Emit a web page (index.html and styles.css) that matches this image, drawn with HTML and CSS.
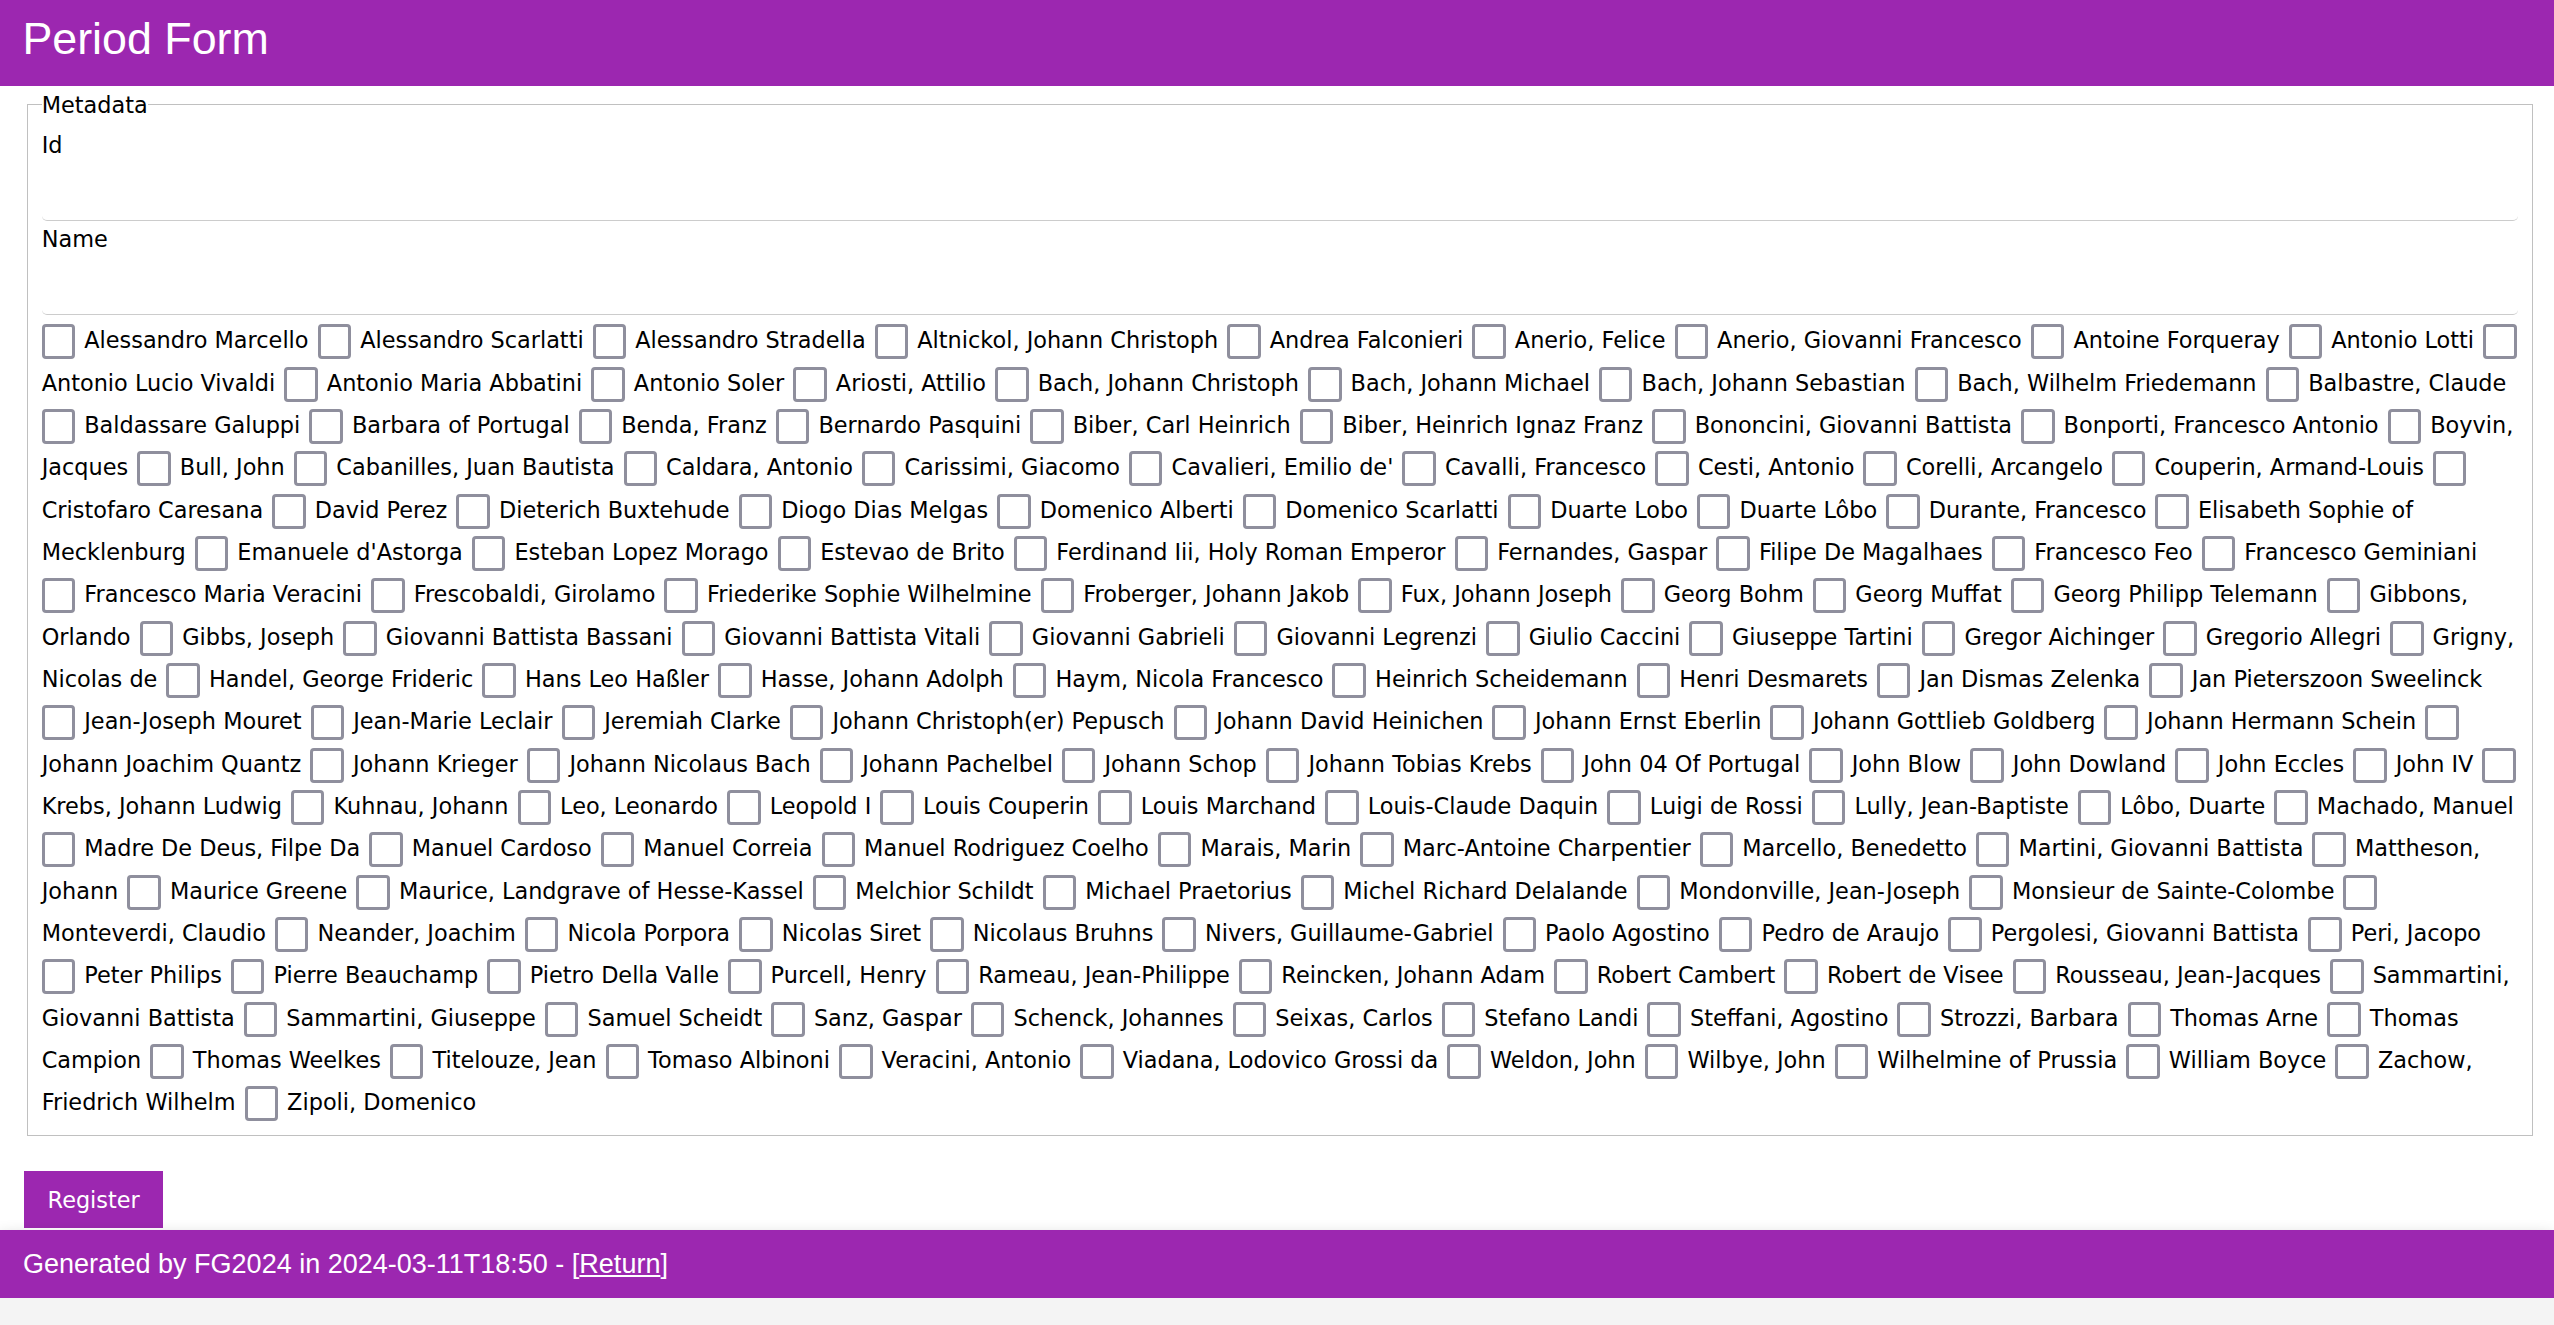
FILE: index.html
```html
<!DOCTYPE html>
<html lang="en">
<head>
<meta charset="utf-8">
<title>Period Form</title>
<link rel="stylesheet" href="styles.css">
</head>
<body>
<header class="topbar"><h1 class="title">Period Form</h1></header>
<main class="main">
<form class="form">
<fieldset class="meta">
<legend class="legend">Metadata</legend>
<label class="field-label" for="f-id">Id</label>
<input class="text-input" id="f-id" type="text">
<label class="field-label" for="f-name">Name</label>
<input class="text-input" id="f-name" type="text">
<div class="options">
<label class="opt"><input type="checkbox" class="cb"> <span class="nm">Alessandro Marcello</span></label>
<label class="opt"><input type="checkbox" class="cb"> <span class="nm">Alessandro Scarlatti</span></label>
<label class="opt"><input type="checkbox" class="cb"> <span class="nm">Alessandro Stradella</span></label>
<label class="opt"><input type="checkbox" class="cb"> <span class="nm">Altnickol, Johann Christoph</span></label>
<label class="opt"><input type="checkbox" class="cb"> <span class="nm">Andrea Falconieri</span></label>
<label class="opt"><input type="checkbox" class="cb"> <span class="nm">Anerio, Felice</span></label>
<label class="opt"><input type="checkbox" class="cb"> <span class="nm">Anerio, Giovanni Francesco</span></label>
<label class="opt"><input type="checkbox" class="cb"> <span class="nm">Antoine Forqueray</span></label>
<label class="opt"><input type="checkbox" class="cb"> <span class="nm">Antonio Lotti</span></label>
<label class="opt"><input type="checkbox" class="cb"> <span class="nm">Antonio Lucio Vivaldi</span></label>
<label class="opt"><input type="checkbox" class="cb"> <span class="nm">Antonio Maria Abbatini</span></label>
<label class="opt"><input type="checkbox" class="cb"> <span class="nm">Antonio Soler</span></label>
<label class="opt"><input type="checkbox" class="cb"> <span class="nm">Ariosti, Attilio</span></label>
<label class="opt"><input type="checkbox" class="cb"> <span class="nm">Bach, Johann Christoph</span></label>
<label class="opt"><input type="checkbox" class="cb"> <span class="nm">Bach, Johann Michael</span></label>
<label class="opt"><input type="checkbox" class="cb"> <span class="nm">Bach, Johann Sebastian</span></label>
<label class="opt"><input type="checkbox" class="cb"> <span class="nm">Bach, Wilhelm Friedemann</span></label>
<label class="opt"><input type="checkbox" class="cb"> <span class="nm">Balbastre, Claude</span></label>
<label class="opt"><input type="checkbox" class="cb"> <span class="nm">Baldassare Galuppi</span></label>
<label class="opt"><input type="checkbox" class="cb"> <span class="nm">Barbara of Portugal</span></label>
<label class="opt"><input type="checkbox" class="cb"> <span class="nm">Benda, Franz</span></label>
<label class="opt"><input type="checkbox" class="cb"> <span class="nm">Bernardo Pasquini</span></label>
<label class="opt"><input type="checkbox" class="cb"> <span class="nm">Biber, Carl Heinrich</span></label>
<label class="opt"><input type="checkbox" class="cb"> <span class="nm">Biber, Heinrich Ignaz Franz</span></label>
<label class="opt"><input type="checkbox" class="cb"> <span class="nm">Bononcini, Giovanni Battista</span></label>
<label class="opt"><input type="checkbox" class="cb"> <span class="nm">Bonporti, Francesco Antonio</span></label>
<label class="opt"><input type="checkbox" class="cb"> <span class="nm">Boyvin, Jacques</span></label>
<label class="opt"><input type="checkbox" class="cb"> <span class="nm">Bull, John</span></label>
<label class="opt"><input type="checkbox" class="cb"> <span class="nm">Cabanilles, Juan Bautista</span></label>
<label class="opt"><input type="checkbox" class="cb"> <span class="nm">Caldara, Antonio</span></label>
<label class="opt"><input type="checkbox" class="cb"> <span class="nm">Carissimi, Giacomo</span></label>
<label class="opt"><input type="checkbox" class="cb"> <span class="nm">Cavalieri, Emilio de'</span></label>
<label class="opt"><input type="checkbox" class="cb"> <span class="nm">Cavalli, Francesco</span></label>
<label class="opt"><input type="checkbox" class="cb"> <span class="nm">Cesti, Antonio</span></label>
<label class="opt"><input type="checkbox" class="cb"> <span class="nm">Corelli, Arcangelo</span></label>
<label class="opt"><input type="checkbox" class="cb"> <span class="nm">Couperin, Armand-Louis</span></label>
<label class="opt"><input type="checkbox" class="cb"> <span class="nm">Cristofaro Caresana</span></label>
<label class="opt"><input type="checkbox" class="cb"> <span class="nm">David Perez</span></label>
<label class="opt"><input type="checkbox" class="cb"> <span class="nm">Dieterich Buxtehude</span></label>
<label class="opt"><input type="checkbox" class="cb"> <span class="nm">Diogo Dias Melgas</span></label>
<label class="opt"><input type="checkbox" class="cb"> <span class="nm">Domenico Alberti</span></label>
<label class="opt"><input type="checkbox" class="cb"> <span class="nm">Domenico Scarlatti</span></label>
<label class="opt"><input type="checkbox" class="cb"> <span class="nm">Duarte Lobo</span></label>
<label class="opt"><input type="checkbox" class="cb"> <span class="nm">Duarte Lôbo</span></label>
<label class="opt"><input type="checkbox" class="cb"> <span class="nm">Durante, Francesco</span></label>
<label class="opt"><input type="checkbox" class="cb"> <span class="nm">Elisabeth Sophie of Mecklenburg</span></label>
<label class="opt"><input type="checkbox" class="cb"> <span class="nm">Emanuele d'Astorga</span></label>
<label class="opt"><input type="checkbox" class="cb"> <span class="nm">Esteban Lopez Morago</span></label>
<label class="opt"><input type="checkbox" class="cb"> <span class="nm">Estevao de Brito</span></label>
<label class="opt"><input type="checkbox" class="cb"> <span class="nm">Ferdinand Iii, Holy Roman Emperor</span></label>
<label class="opt"><input type="checkbox" class="cb"> <span class="nm">Fernandes, Gaspar</span></label>
<label class="opt"><input type="checkbox" class="cb"> <span class="nm">Filipe De Magalhaes</span></label>
<label class="opt"><input type="checkbox" class="cb"> <span class="nm">Francesco Feo</span></label>
<label class="opt"><input type="checkbox" class="cb"> <span class="nm">Francesco Geminiani</span></label>
<label class="opt"><input type="checkbox" class="cb"> <span class="nm">Francesco Maria Veracini</span></label>
<label class="opt"><input type="checkbox" class="cb"> <span class="nm">Frescobaldi, Girolamo</span></label>
<label class="opt"><input type="checkbox" class="cb"> <span class="nm">Friederike Sophie Wilhelmine</span></label>
<label class="opt"><input type="checkbox" class="cb"> <span class="nm">Froberger, Johann Jakob</span></label>
<label class="opt"><input type="checkbox" class="cb"> <span class="nm">Fux, Johann Joseph</span></label>
<label class="opt"><input type="checkbox" class="cb"> <span class="nm">Georg Bohm</span></label>
<label class="opt"><input type="checkbox" class="cb"> <span class="nm">Georg Muffat</span></label>
<label class="opt"><input type="checkbox" class="cb"> <span class="nm">Georg Philipp Telemann</span></label>
<label class="opt"><input type="checkbox" class="cb"> <span class="nm">Gibbons, Orlando</span></label>
<label class="opt"><input type="checkbox" class="cb"> <span class="nm">Gibbs, Joseph</span></label>
<label class="opt"><input type="checkbox" class="cb"> <span class="nm">Giovanni Battista Bassani</span></label>
<label class="opt"><input type="checkbox" class="cb"> <span class="nm">Giovanni Battista Vitali</span></label>
<label class="opt"><input type="checkbox" class="cb"> <span class="nm">Giovanni Gabrieli</span></label>
<label class="opt"><input type="checkbox" class="cb"> <span class="nm">Giovanni Legrenzi</span></label>
<label class="opt"><input type="checkbox" class="cb"> <span class="nm">Giulio Caccini</span></label>
<label class="opt"><input type="checkbox" class="cb"> <span class="nm">Giuseppe Tartini</span></label>
<label class="opt"><input type="checkbox" class="cb"> <span class="nm">Gregor Aichinger</span></label>
<label class="opt"><input type="checkbox" class="cb"> <span class="nm">Gregorio Allegri</span></label>
<label class="opt"><input type="checkbox" class="cb"> <span class="nm">Grigny, Nicolas de</span></label>
<label class="opt"><input type="checkbox" class="cb"> <span class="nm">Handel, George Frideric</span></label>
<label class="opt"><input type="checkbox" class="cb"> <span class="nm">Hans Leo Haßler</span></label>
<label class="opt"><input type="checkbox" class="cb"> <span class="nm">Hasse, Johann Adolph</span></label>
<label class="opt"><input type="checkbox" class="cb"> <span class="nm">Haym, Nicola Francesco</span></label>
<label class="opt"><input type="checkbox" class="cb"> <span class="nm">Heinrich Scheidemann</span></label>
<label class="opt"><input type="checkbox" class="cb"> <span class="nm">Henri Desmarets</span></label>
<label class="opt"><input type="checkbox" class="cb"> <span class="nm">Jan Dismas Zelenka</span></label>
<label class="opt"><input type="checkbox" class="cb"> <span class="nm">Jan Pieterszoon Sweelinck</span></label>
<label class="opt"><input type="checkbox" class="cb"> <span class="nm">Jean-Joseph Mouret</span></label>
<label class="opt"><input type="checkbox" class="cb"> <span class="nm">Jean-Marie Leclair</span></label>
<label class="opt"><input type="checkbox" class="cb"> <span class="nm">Jeremiah Clarke</span></label>
<label class="opt"><input type="checkbox" class="cb"> <span class="nm">Johann Christoph(er) Pepusch</span></label>
<label class="opt"><input type="checkbox" class="cb"> <span class="nm">Johann David Heinichen</span></label>
<label class="opt"><input type="checkbox" class="cb"> <span class="nm">Johann Ernst Eberlin</span></label>
<label class="opt"><input type="checkbox" class="cb"> <span class="nm">Johann Gottlieb Goldberg</span></label>
<label class="opt"><input type="checkbox" class="cb"> <span class="nm">Johann Hermann Schein</span></label>
<label class="opt"><input type="checkbox" class="cb"> <span class="nm">Johann Joachim Quantz</span></label>
<label class="opt"><input type="checkbox" class="cb"> <span class="nm">Johann Krieger</span></label>
<label class="opt"><input type="checkbox" class="cb"> <span class="nm">Johann Nicolaus Bach</span></label>
<label class="opt"><input type="checkbox" class="cb"> <span class="nm">Johann Pachelbel</span></label>
<label class="opt"><input type="checkbox" class="cb"> <span class="nm">Johann Schop</span></label>
<label class="opt"><input type="checkbox" class="cb"> <span class="nm">Johann Tobias Krebs</span></label>
<label class="opt"><input type="checkbox" class="cb"> <span class="nm">John 04 Of Portugal</span></label>
<label class="opt"><input type="checkbox" class="cb"> <span class="nm">John Blow</span></label>
<label class="opt"><input type="checkbox" class="cb"> <span class="nm">John Dowland</span></label>
<label class="opt"><input type="checkbox" class="cb"> <span class="nm">John Eccles</span></label>
<label class="opt"><input type="checkbox" class="cb"> <span class="nm">John IV</span></label>
<label class="opt"><input type="checkbox" class="cb"> <span class="nm">Krebs, Johann Ludwig</span></label>
<label class="opt"><input type="checkbox" class="cb"> <span class="nm">Kuhnau, Johann</span></label>
<label class="opt"><input type="checkbox" class="cb"> <span class="nm">Leo, Leonardo</span></label>
<label class="opt"><input type="checkbox" class="cb"> <span class="nm">Leopold I</span></label>
<label class="opt"><input type="checkbox" class="cb"> <span class="nm">Louis Couperin</span></label>
<label class="opt"><input type="checkbox" class="cb"> <span class="nm">Louis Marchand</span></label>
<label class="opt"><input type="checkbox" class="cb"> <span class="nm">Louis-Claude Daquin</span></label>
<label class="opt"><input type="checkbox" class="cb"> <span class="nm">Luigi de Rossi</span></label>
<label class="opt"><input type="checkbox" class="cb"> <span class="nm">Lully, Jean-Baptiste</span></label>
<label class="opt"><input type="checkbox" class="cb"> <span class="nm">Lôbo, Duarte</span></label>
<label class="opt"><input type="checkbox" class="cb"> <span class="nm">Machado, Manuel</span></label>
<label class="opt"><input type="checkbox" class="cb"> <span class="nm">Madre De Deus, Filpe Da</span></label>
<label class="opt"><input type="checkbox" class="cb"> <span class="nm">Manuel Cardoso</span></label>
<label class="opt"><input type="checkbox" class="cb"> <span class="nm">Manuel Correia</span></label>
<label class="opt"><input type="checkbox" class="cb"> <span class="nm">Manuel Rodriguez Coelho</span></label>
<label class="opt"><input type="checkbox" class="cb"> <span class="nm">Marais, Marin</span></label>
<label class="opt"><input type="checkbox" class="cb"> <span class="nm">Marc-Antoine Charpentier</span></label>
<label class="opt"><input type="checkbox" class="cb"> <span class="nm">Marcello, Benedetto</span></label>
<label class="opt"><input type="checkbox" class="cb"> <span class="nm">Martini, Giovanni Battista</span></label>
<label class="opt"><input type="checkbox" class="cb"> <span class="nm">Mattheson, Johann</span></label>
<label class="opt"><input type="checkbox" class="cb"> <span class="nm">Maurice Greene</span></label>
<label class="opt"><input type="checkbox" class="cb"> <span class="nm">Maurice, Landgrave of Hesse-Kassel</span></label>
<label class="opt"><input type="checkbox" class="cb"> <span class="nm">Melchior Schildt</span></label>
<label class="opt"><input type="checkbox" class="cb"> <span class="nm">Michael Praetorius</span></label>
<label class="opt"><input type="checkbox" class="cb"> <span class="nm">Michel Richard Delalande</span></label>
<label class="opt"><input type="checkbox" class="cb"> <span class="nm">Mondonville, Jean-Joseph</span></label>
<label class="opt"><input type="checkbox" class="cb"> <span class="nm">Monsieur de Sainte-Colombe</span></label>
<label class="opt"><input type="checkbox" class="cb"> <span class="nm">Monteverdi, Claudio</span></label>
<label class="opt"><input type="checkbox" class="cb"> <span class="nm">Neander, Joachim</span></label>
<label class="opt"><input type="checkbox" class="cb"> <span class="nm">Nicola Porpora</span></label>
<label class="opt"><input type="checkbox" class="cb"> <span class="nm">Nicolas Siret</span></label>
<label class="opt"><input type="checkbox" class="cb"> <span class="nm">Nicolaus Bruhns</span></label>
<label class="opt"><input type="checkbox" class="cb"> <span class="nm">Nivers, Guillaume-Gabriel</span></label>
<label class="opt"><input type="checkbox" class="cb"> <span class="nm">Paolo Agostino</span></label>
<label class="opt"><input type="checkbox" class="cb"> <span class="nm">Pedro de Araujo</span></label>
<label class="opt"><input type="checkbox" class="cb"> <span class="nm">Pergolesi, Giovanni Battista</span></label>
<label class="opt"><input type="checkbox" class="cb"> <span class="nm">Peri, Jacopo</span></label>
<label class="opt"><input type="checkbox" class="cb"> <span class="nm">Peter Philips</span></label>
<label class="opt"><input type="checkbox" class="cb"> <span class="nm">Pierre Beauchamp</span></label>
<label class="opt"><input type="checkbox" class="cb"> <span class="nm">Pietro Della Valle</span></label>
<label class="opt"><input type="checkbox" class="cb"> <span class="nm">Purcell, Henry</span></label>
<label class="opt"><input type="checkbox" class="cb"> <span class="nm">Rameau, Jean-Philippe</span></label>
<label class="opt"><input type="checkbox" class="cb"> <span class="nm">Reincken, Johann Adam</span></label>
<label class="opt"><input type="checkbox" class="cb"> <span class="nm">Robert Cambert</span></label>
<label class="opt"><input type="checkbox" class="cb"> <span class="nm">Robert de Visee</span></label>
<label class="opt"><input type="checkbox" class="cb"> <span class="nm">Rousseau, Jean-Jacques</span></label>
<label class="opt"><input type="checkbox" class="cb"> <span class="nm">Sammartini, Giovanni Battista</span></label>
<label class="opt"><input type="checkbox" class="cb"> <span class="nm">Sammartini, Giuseppe</span></label>
<label class="opt"><input type="checkbox" class="cb"> <span class="nm">Samuel Scheidt</span></label>
<label class="opt"><input type="checkbox" class="cb"> <span class="nm">Sanz, Gaspar</span></label>
<label class="opt"><input type="checkbox" class="cb"> <span class="nm">Schenck, Johannes</span></label>
<label class="opt"><input type="checkbox" class="cb"> <span class="nm">Seixas, Carlos</span></label>
<label class="opt"><input type="checkbox" class="cb"> <span class="nm">Stefano Landi</span></label>
<label class="opt"><input type="checkbox" class="cb"> <span class="nm">Steffani, Agostino</span></label>
<label class="opt"><input type="checkbox" class="cb"> <span class="nm">Strozzi, Barbara</span></label>
<label class="opt"><input type="checkbox" class="cb"> <span class="nm">Thomas Arne</span></label>
<label class="opt"><input type="checkbox" class="cb"> <span class="nm">Thomas Campion</span></label>
<label class="opt"><input type="checkbox" class="cb"> <span class="nm">Thomas Weelkes</span></label>
<label class="opt"><input type="checkbox" class="cb"> <span class="nm">Titelouze, Jean</span></label>
<label class="opt"><input type="checkbox" class="cb"> <span class="nm">Tomaso Albinoni</span></label>
<label class="opt"><input type="checkbox" class="cb"> <span class="nm">Veracini, Antonio</span></label>
<label class="opt"><input type="checkbox" class="cb"> <span class="nm">Viadana, Lodovico Grossi da</span></label>
<label class="opt"><input type="checkbox" class="cb"> <span class="nm">Weldon, John</span></label>
<label class="opt"><input type="checkbox" class="cb"> <span class="nm">Wilbye, John</span></label>
<label class="opt"><input type="checkbox" class="cb"> <span class="nm">Wilhelmine of Prussia</span></label>
<label class="opt"><input type="checkbox" class="cb"> <span class="nm">William Boyce</span></label>
<label class="opt"><input type="checkbox" class="cb"> <span class="nm">Zachow, Friedrich Wilhelm</span></label>
<label class="opt"><input type="checkbox" class="cb"> <span class="nm">Zipoli, Domenico</span></label>
</div>
</fieldset>
<button class="btn" type="button">Register</button>
</form>
</main>
<footer class="footer">Generated by FG2024 in 2024-03-11T18:50 - [<a class="footer-link" href="#">Return</a>]</footer>
</body>
</html>
```
FILE: styles.css
```css
html {
  background: #f4f4f4;
}

body {
  margin: 0;
  background: #ffffff;
  color: #000000;
  font-family: "DejaVu Sans", sans-serif;
  font-size: 22.4px;
}

.topbar {
  background: #9c27b0;
  color: #ffffff;
  padding: 13px 22.4px 21.8px;
}

.title {
  margin: 0;
  font-family: "Liberation Sans", Arial, sans-serif;
  font-weight: 400;
  font-size: 44.8px;
  line-height: 51.5px;
}

.main {
  padding: 5.6px 18.2px 2px 24.2px;
}

.form {
  margin: 0;
}

.meta {
  margin: 0 3px;
  border: 1px solid #c0c0c0;
  padding: 14.6px 14.1px 11.7px 13.5px;
  min-width: 0;
}

.legend {
  padding: 0;
  line-height: 26px;
}

.field-label {
  display: block;
  line-height: 26px;
}

.text-input {
  display: block;
  width: 100%;
  height: 63px;
  box-sizing: border-box;
  margin: 0 0 4.4px;
  padding: 0 4px;
  border: 0;
  border-bottom: 1px solid #cccccc;
  border-radius: 5px;
  background: transparent;
  font-family: "DejaVu Sans", sans-serif;
  font-size: 22.4px;
  outline: none;
}

.options {
  line-height: 42.33px;
  word-spacing: 1.93px;
}

.nm {
  word-spacing: 0;
}

.cb {
  -webkit-appearance: none;
  appearance: none;
  display: inline-block;
  width: 33.5px;
  height: 35px;
  box-sizing: border-box;
  margin: 0;
  border: 3px solid #8f8f9d;
  border-radius: 4px;
  background: #ffffff;
  vertical-align: middle;
}

.btn {
  display: block;
  margin: 35px 0 0;
  padding: 15.5px 23.4px;
  border: 0;
  background: #9c27b0;
  color: #ffffff;
  font-family: "DejaVu Sans", sans-serif;
  font-size: 22.4px;
  line-height: 26px;
}

.footer {
  background: #9c27b0;
  color: #ffffff;
  padding: 18.5px 23px;
  font-family: "Liberation Sans", Arial, sans-serif;
  font-size: 27px;
  line-height: 31px;
  box-shadow: 0 8px 16px rgba(0, 0, 0, 0.3);
}

.footer-link {
  color: #ffffff;
  text-decoration: underline;
}
```
